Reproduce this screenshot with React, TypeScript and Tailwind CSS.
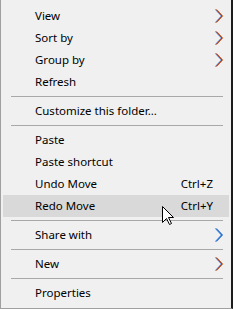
type Item =
  | { kind: "sep" }
  | { kind: "item"; label: string; shortcut?: string; arrow?: "red" | "blue"; hover?: boolean };

const ITEMS: Item[] = [
  { kind: "item", label: "View", arrow: "red" },
  { kind: "item", label: "Sort by", arrow: "red" },
  { kind: "item", label: "Group by", arrow: "red" },
  { kind: "item", label: "Refresh" },
  { kind: "sep" },
  { kind: "item", label: "Customize this folder..." },
  { kind: "sep" },
  { kind: "item", label: "Paste" },
  { kind: "item", label: "Paste shortcut" },
  { kind: "item", label: "Undo Move", shortcut: "Ctrl+Z" },
  { kind: "item", label: "Redo Move", shortcut: "Ctrl+Y", hover: true },
  { kind: "sep" },
  { kind: "item", label: "Share with", arrow: "blue" },
  { kind: "sep" },
  { kind: "item", label: "New", arrow: "red" },
  { kind: "sep" },
  { kind: "item", label: "Properties" },
];

function Chevron({ tone }: { tone: "red" | "blue" }) {
  // cleartype-looking chevron: coloured fringes around a dark stroke
  const left = tone === "blue" ? "#2f8cf0" : "#4a90e8";
  const right = tone === "blue" ? "#5a8ad8" : "#e0601a";
  const mid = tone === "blue" ? "#2a6ac8" : "#9a3a30";
  return (
    <svg width="8" height="14" viewBox="0 0 8 14" className="block">
      <polyline points="0.3,0.5 6.3,7 0.3,13.5" fill="none" stroke={left} strokeWidth="1" />
      <polyline points="1.7,0.5 7.7,7 1.7,13.5" fill="none" stroke={right} strokeWidth="1" />
      <polyline points="1,0.5 7,7 1,13.5" fill="none" stroke={mid} strokeWidth="1" />
    </svg>
  );
}

function Cursor() {
  return (
    <svg width="13" height="20" viewBox="0 0 13 20" className="block">
      <path
        d="M0.5 0.5 V16.5 L4.5 12.5 L7.5 18.5 L9.5 17.5 L6.5 11.5 H11.5 Z"
        fill="#fff"
        stroke="#000"
        strokeWidth="1"
        strokeLinejoin="miter"
      />
    </svg>
  );
}

export default function App() {
  return (
    <div
      className="relative w-[233px] h-[309px] bg-[#f0f0f0] border-l border-b border-[#a0a0a0] border-r-2 border-r-[#1c1c1c] pt-[5px] px-[2px] text-[11.5px] text-black"
      style={{ fontFamily: '"Noto Sans", "Open Sans", sans-serif' }}
    >
      {ITEMS.map((it, i) =>
        it.kind === "sep" ? (
          <div key={i} className="h-[7px] flex items-center pl-[8px] pr-[6px]">
            <div className="h-px w-full bg-[#a8a8a8]" />
          </div>
        ) : (
          <div
            key={i}
            className={`h-[22px] flex items-center justify-between pl-[32px] ${
              it.arrow ? "pr-[6px]" : "pr-[16px]"
            } ${it.hover ? "bg-[#d9d9d9]" : ""}`}
          >
            <span className="leading-none">{it.label}</span>
            {it.shortcut && <span className="leading-none">{it.shortcut}</span>}
            {it.arrow && <Chevron tone={it.arrow} />}
          </div>
        )
      )}

      {/* mouse pointer over "Redo Move" */}
      <div className="absolute left-[161px] top-[206px]">
        <Cursor />
      </div>
    </div>
  );
}
